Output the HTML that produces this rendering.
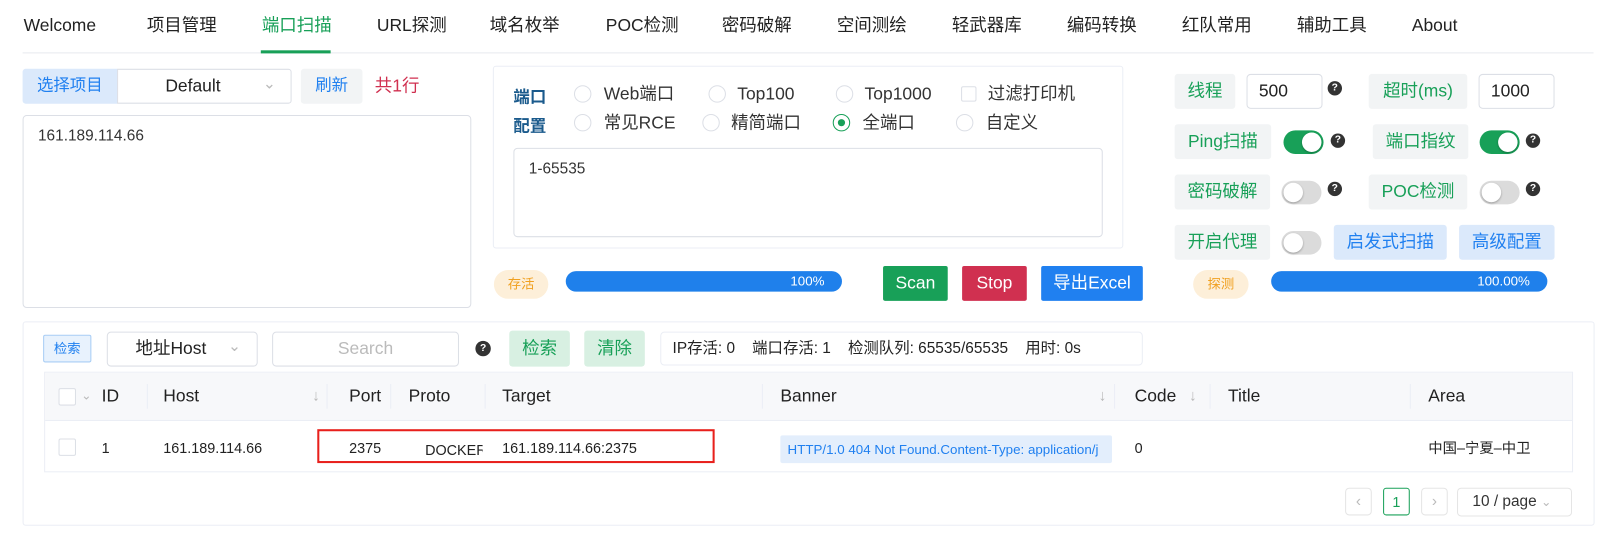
<!DOCTYPE html>
<html><head><meta charset="utf-8"><style>
*{box-sizing:border-box;margin:0;padding:0}
html,body{width:1610px;height:546px;overflow:hidden;background:#fff}
#w{position:absolute;left:0;top:0;width:1568px;height:532px;transform:scale(1.02679);transform-origin:0 0;font-family:"Liberation Sans","Noto Sans CJK SC",sans-serif;color:#333;font-size:15px;line-height:20px}
.a{position:absolute;line-height:20px}
.c{display:flex;align-items:center;justify-content:center}
.nav{top:15px;font-size:17px;color:#222}
.lbl{background:#f2f4f5;color:#18a058;border-radius:3px}
.inp{border:1px solid #dcdfe6;border-radius:4px;background:#fff}
.q{width:14px;height:14px;border-radius:50%;background:#333;color:#fff;font-size:10px;font-weight:bold;line-height:14px}
.rad{width:17px;height:17px;border:1px solid #dcdfe6;border-radius:50%}
.sw{width:39px;height:23px;border-radius:12px;background:#dbdbdb}
.sw i{position:absolute;top:2px;left:2px;width:19px;height:19px;border-radius:50%;background:#fff;box-shadow:0 1px 2px rgba(0,0,0,.3)}
.sw.on{background:#18a058}.sw.on i{left:18px}
.btnb{background:#dbe9fb;color:#2080f0;border-radius:3px}
.th{top:376px;font-size:17px;color:#222}
.dv{top:374px;width:1px;height:24px;background:#ebeef5}
.td{top:426px;font-size:14px;color:#222}
.ar{color:#bbb;font-size:15px}
.rt{font-size:17px}
</style></head><body><div id="w">
<div class="a nav" style="left:23px">Welcome</div>
<div class="a nav" style="left:143px">项目管理</div>
<div class="a nav" style="left:255px;color:#18a058">端口扫描</div>
<div class="a nav" style="left:367px">URL探测</div>
<div class="a nav" style="left:477px">域名枚举</div>
<div class="a nav" style="left:590px">POC检测</div>
<div class="a nav" style="left:703px">密码破解</div>
<div class="a nav" style="left:815px">空间测绘</div>
<div class="a nav" style="left:927px">轻武器库</div>
<div class="a nav" style="left:1039px">编码转换</div>
<div class="a nav" style="left:1151px">红队常用</div>
<div class="a nav" style="left:1263px">辅助工具</div>
<div class="a nav" style="left:1375px">About</div>
<div class="a" style="left:22px;top:51px;width:1530px;height:1px;background:#e8eaef"></div>
<div class="a" style="left:254px;top:49px;width:68px;height:3px;background:#18a058"></div>

<div class="a c" style="left:22px;top:67px;width:92px;height:34px;background:#dbe9fb;color:#2080f0;font-size:16px;border-radius:3px 0 0 3px">选择项目</div>
<div class="a inp" style="left:114px;top:67px;width:170px;height:34px;border-radius:0 3px 3px 0"></div>
<div class="a" style="left:161px;top:74px;font-size:17px;color:#222">Default</div>
<div class="a ar" style="left:256px;top:72px">&#8964;</div>
<div class="a c" style="left:293px;top:67px;width:60px;height:34px;background:#f2f4f5;color:#2080f0;font-size:16px;border-radius:3px">刷新</div>
<div class="a" style="left:365px;top:74px;color:#d03050;font-size:17px">共1行</div>
<div class="a inp" style="left:22px;top:112px;width:437px;height:188px"></div>
<div class="a" style="left:37px;top:123px;font-size:15px">161.189.114.66</div>

<div class="a" style="left:480px;top:64px;width:614px;height:178px;border:1px solid #ebeef5;border-radius:3px"></div>
<div class="a" style="left:500px;top:82px;font-weight:bold;color:#1a5a8c;font-size:16px;line-height:28px">端口<br>配置</div>
<div class="a rad" style="left:559px;top:83px"></div><div class="a rt" style="left:588px;top:82px">Web端口</div>
<div class="a rad" style="left:690px;top:83px"></div><div class="a rt" style="left:718px;top:82px">Top100</div>
<div class="a rad" style="left:814px;top:83px"></div><div class="a rt" style="left:842px;top:82px">Top1000</div>
<div class="a" style="left:936px;top:84px;width:15px;height:15px;border:1px solid #dcdfe6;border-radius:2px"></div><div class="a rt" style="left:962px;top:82px">过滤打印机</div>
<div class="a rad" style="left:559px;top:111px"></div><div class="a rt" style="left:588px;top:110px">常见RCE</div>
<div class="a rad" style="left:684px;top:111px"></div><div class="a rt" style="left:712px;top:110px">精简端口</div>
<div class="a rad" style="left:811px;top:111px;border-color:#18a058"><div class="a" style="left:4px;top:4px;width:7px;height:7px;border-radius:50%;background:#18a058"></div></div><div class="a rt" style="left:840px;top:110px">全端口</div>
<div class="a rad" style="left:931px;top:111px"></div><div class="a rt" style="left:960px;top:110px">自定义</div>
<div class="a inp" style="left:500px;top:144px;width:574px;height:87px"></div>
<div class="a" style="left:515px;top:155px;font-size:15px">1-65535</div>

<div class="a c" style="left:481px;top:263px;width:53px;height:28px;border-radius:14px;background:#fdefd9;color:#f0a020;font-size:13px">存活</div>
<div class="a" style="left:551px;top:264px;width:269px;height:20px;border-radius:10px;background:#1f80eb;color:#fff;font-size:13px;text-align:right;padding-right:17px;line-height:20px">100%</div>
<div class="a c" style="left:860px;top:259px;width:63px;height:34px;background:#18a058;color:#fff;font-size:17px;border-radius:2px">Scan</div>
<div class="a c" style="left:937px;top:259px;width:63px;height:34px;background:#d03050;color:#fff;font-size:17px;border-radius:2px">Stop</div>
<div class="a c" style="left:1014px;top:259px;width:99px;height:34px;background:#2080f0;color:#fff;font-size:17px;border-radius:2px">导出Excel</div>

<div class="a c lbl" style="left:1144px;top:72px;width:59px;height:34px;font-size:17px">线程</div>
<div class="a inp" style="left:1214px;top:72px;width:74px;height:34px"></div><div class="a" style="left:1226px;top:79px;font-size:17px;color:#222">500</div>
<div class="a c q" style="left:1293px;top:79px">?</div>
<div class="a c lbl" style="left:1333px;top:72px;width:96px;height:34px;font-size:17px">超时(ms)</div>
<div class="a inp" style="left:1440px;top:72px;width:74px;height:34px"></div><div class="a" style="left:1452px;top:79px;font-size:17px;color:#222">1000</div>
<div class="a c lbl" style="left:1144px;top:121px;width:94px;height:34px;font-size:17px">Ping扫描</div>
<div class="a sw on" style="left:1250px;top:127px"><i></i></div><div class="a c q" style="left:1296px;top:130px">?</div>
<div class="a c lbl" style="left:1337px;top:121px;width:93px;height:34px;font-size:17px">端口指纹</div>
<div class="a sw on" style="left:1441px;top:127px"><i></i></div><div class="a c q" style="left:1486px;top:130px">?</div>
<div class="a c lbl" style="left:1144px;top:170px;width:93px;height:34px;font-size:17px">密码破解</div>
<div class="a sw" style="left:1248px;top:176px"><i></i></div><div class="a c q" style="left:1293px;top:177px">?</div>
<div class="a c lbl" style="left:1333px;top:170px;width:96px;height:34px;font-size:17px">POC检测</div>
<div class="a sw" style="left:1441px;top:176px"><i></i></div><div class="a c q" style="left:1486px;top:177px">?</div>
<div class="a c lbl" style="left:1144px;top:219px;width:93px;height:34px;font-size:17px">开启代理</div>
<div class="a sw" style="left:1248px;top:225px"><i></i></div>
<div class="a c btnb" style="left:1299px;top:219px;width:110px;height:34px;font-size:17px">启发式扫描</div>
<div class="a c btnb" style="left:1421px;top:219px;width:93px;height:34px;font-size:17px">高级配置</div>
<div class="a c" style="left:1162px;top:263px;width:54px;height:28px;border-radius:14px;background:#fdefd9;color:#f0a020;font-size:13px">探测</div>
<div class="a" style="left:1238px;top:264px;width:269px;height:20px;border-radius:10px;background:#1f80eb;color:#fff;font-size:13px;text-align:right;padding-right:17px;line-height:20px">100.00%</div>

<div class="a" style="left:22px;top:313px;width:1531px;height:199px;border:1px solid #ebeef5;border-radius:3px"></div>
<div class="a c" style="left:42px;top:326px;width:47px;height:27px;background:#e8f2fd;border:1px solid #a8cdf5;color:#2080f0;font-size:13px;border-radius:2px">检索</div>
<div class="a inp" style="left:104px;top:323px;width:147px;height:34px"></div>
<div class="a" style="left:132px;top:330px;font-size:17px;color:#222">地址Host</div><div class="a ar" style="left:222px;top:328px">&#8964;</div>
<div class="a inp c" style="left:265px;top:323px;width:182px;height:34px;color:#bbb;font-size:17px">Search</div>
<div class="a c q" style="left:463px;top:332px;width:15px;height:15px">?</div>
<div class="a c" style="left:496px;top:322px;width:59px;height:35px;background:#d8f0e2;color:#18a058;font-size:17px;border-radius:3px">检索</div>
<div class="a c" style="left:569px;top:322px;width:59px;height:35px;background:#d8f0e2;color:#18a058;font-size:17px;border-radius:3px">清除</div>
<div class="a inp" style="left:643px;top:323px;width:470px;height:33px;border-color:#ebeef5;font-size:15px;line-height:31px;padding-left:11px;color:#222;white-space:pre">IP存活: 0    端口存活: 1    检测队列: 65535/65535    用时: 0s</div>

<div class="a" style="left:43px;top:362px;width:1489px;height:98px;border:1px solid #ebeef5"></div>
<div class="a" style="left:44px;top:363px;width:1487px;height:47px;background:#f7f8fa;border-bottom:1px solid #ebeef5"></div>
<div class="a" style="left:57px;top:378px;width:17px;height:17px;border:1px solid #dcdfe6;border-radius:2px;background:#fff"></div>
<div class="a ar" style="left:79px;top:375px;font-size:12px">&#8964;</div>
<div class="a th" style="left:99px">ID</div><div class="a dv" style="left:143px"></div>
<div class="a th" style="left:159px">Host</div><div class="a ar" style="left:304px;top:376px">↓</div><div class="a dv" style="left:318px"></div>
<div class="a th" style="left:340px">Port</div><div class="a dv" style="left:380px"></div>
<div class="a th" style="left:398px">Proto</div><div class="a dv" style="left:472px"></div>
<div class="a th" style="left:489px">Target</div><div class="a dv" style="left:742px"></div>
<div class="a th" style="left:760px">Banner</div><div class="a ar" style="left:1070px;top:376px">↓</div><div class="a dv" style="left:1085px"></div>
<div class="a th" style="left:1105px">Code</div><div class="a ar" style="left:1158px;top:376px">↓</div><div class="a dv" style="left:1178px"></div>
<div class="a th" style="left:1196px">Title</div><div class="a dv" style="left:1373px"></div>
<div class="a th" style="left:1391px">Area</div>
<div class="a" style="left:57px;top:427px;width:17px;height:17px;border:1px solid #dcdfe6;border-radius:2px"></div>
<div class="a td" style="left:99px">1</div>
<div class="a td" style="left:159px">161.189.114.66</div>
<div class="a td" style="left:340px">2375</div>
<div class="a td" style="left:414px;top:428px;width:56px;overflow:hidden;white-space:nowrap">DOCKER</div>
<div class="a td" style="left:489px">161.189.114.66:2375</div>
<div class="a" style="left:309px;top:418px;width:387px;height:33px;border:2px solid #e8201c"></div>
<div class="a" style="left:760px;top:424px;width:323px;height:27px;background:#e3eefc;color:#2080f0;font-size:13px;line-height:27px;padding-left:7px;border-radius:2px;white-space:nowrap;overflow:hidden">HTTP/1.0 404 Not Found.Content-Type: application/j</div>
<div class="a td" style="left:1105px">0</div>
<div class="a td" style="left:1391px">中国–宁夏–中卫</div>

<div class="a c inp ar" style="left:1310px;top:475px;width:26px;height:27px;border-color:#e5e5e5">‹</div>
<div class="a c" style="left:1347px;top:475px;width:26px;height:27px;border:1px solid #18a058;border-radius:3px;color:#18a058;font-size:14px">1</div>
<div class="a c inp ar" style="left:1384px;top:475px;width:26px;height:27px;border-color:#e5e5e5">›</div>
<div class="a inp" style="left:1419px;top:475px;width:112px;height:28px;border-color:#e5e5e5;font-size:15px;line-height:26px;padding-left:14px;color:#333">10 / page <span class="ar" style="font-size:12px">&#8964;</span></div>
</div></body></html>
